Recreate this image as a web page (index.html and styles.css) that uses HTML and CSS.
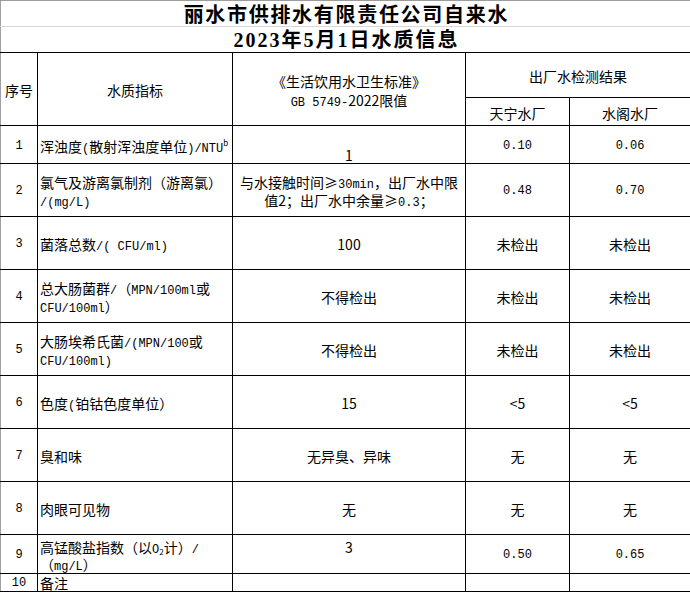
FILE: index.html
```html
<!DOCTYPE html>
<html lang="zh-CN">
<head>
<meta charset="utf-8">
<title>水质信息</title>
<link rel="stylesheet" href="styles.css">
</head>
<body>
<table class="sheet">
  <colgroup>
    <col class="c1"><col class="c2"><col class="c3"><col class="c4"><col class="c5">
  </colgroup>
  <tr class="t1"><td colspan="5" class="title">丽水市供排水有限责任公司自来水</td></tr>
  <tr class="t2"><td colspan="5" class="title title2">2023年5月1日水质信息</td></tr>
  <tr class="h1">
    <td rowspan="2" class="l">序号</td>
    <td rowspan="2">水质指标</td>
    <td rowspan="2" class="std">《生活饮用水卫生标准》<br><span class="m">GB 5749-</span>2022限值</td>
    <td colspan="2">出厂水检测结果</td>
  </tr>
  <tr class="h2"><td>天宁水厂</td><td>水阁水厂</td></tr>
  <tr class="r1">
    <td class="l m">1</td>
    <td class="left">浑浊度<span class="m">(</span>散射浑浊度单位<span class="m">)/NTU</span><sup class="sup">b</sup></td>
    <td class="bot">1</td>
    <td class="m">0.10</td><td class="m">0.06</td>
  </tr>
  <tr class="r">
    <td class="l m">2</td>
    <td class="left">氯气及游离氯制剂（游离氯）<br><span class="m">/(mg/L)</span></td>
    <td>与水接触时间≥<span class="m">30min</span>，出厂水中限<br>值2；出厂水中余量≥<span class="m">0.3</span>；</td>
    <td class="m">0.48</td><td class="m">0.70</td>
  </tr>
  <tr class="r">
    <td class="l m">3</td>
    <td class="left">菌落总数<span class="m">/( CFU/ml)</span></td>
    <td>100</td>
    <td>未检出</td><td>未检出</td>
  </tr>
  <tr class="r">
    <td class="l m">4</td>
    <td class="left">总大肠菌群<span class="m">/</span>（<span class="m">MPN/100ml</span>或<br><span class="m">CFU/100ml</span>）</td>
    <td>不得检出</td>
    <td>未检出</td><td>未检出</td>
  </tr>
  <tr class="r">
    <td class="l m">5</td>
    <td class="left">大肠埃希氏菌<span class="m">/(MPN/100</span>或<br><span class="m">CFU/100ml)</span></td>
    <td>不得检出</td>
    <td>未检出</td><td>未检出</td>
  </tr>
  <tr class="r">
    <td class="l m">6</td>
    <td class="left">色度<span class="m">(</span>铂钴色度单位）</td>
    <td>15</td>
    <td>&lt;5</td><td>&lt;5</td>
  </tr>
  <tr class="r">
    <td class="l m">7</td>
    <td class="left">臭和味</td>
    <td>无异臭、异味</td>
    <td>无</td><td>无</td>
  </tr>
  <tr class="r">
    <td class="l m">8</td>
    <td class="left">肉眼可见物</td>
    <td>无</td>
    <td>无</td><td>无</td>
  </tr>
  <tr class="r9">
    <td class="l m">9</td>
    <td class="left top">高锰酸盐指数（以<span class="m">O</span><sub class="sub">2</sub>计）<span class="m">/</span><br>（<span class="m">mg/L</span>）</td>
    <td class="top">3</td>
    <td class="m">0.50</td><td class="m">0.65</td>
  </tr>
  <tr class="r10">
    <td class="l m">10</td>
    <td class="left">备注</td>
    <td></td>
    <td></td><td></td>
  </tr>
</table>
</body>
</html>
```

FILE: styles.css
```css
html, body {
  margin: 0;
  padding: 0;
  background: #ffffff;
}

body {
  font-family: "Noto Sans CJK SC", sans-serif;
  font-size: 14px;
  color: #000000;
}

.sheet {
  border-collapse: collapse;
  table-layout: fixed;
  width: 690px;
}

.c1 { width: 37px; }
.c2 { width: 195px; }
.c3 { width: 233px; }
.c4 { width: 104px; }
.c5 { width: 121px; }

.sheet td {
  border: 1px solid #000000;
  padding: 3px 0 0 0;
  text-align: center;
  vertical-align: middle;
  line-height: 17px;
  white-space: nowrap;
  overflow: hidden;
}

.sheet .r td {
  line-height: 18px;
  padding-top: 2px;
}

.sheet td.l {
  border-left: 1px solid #a0a0a0;
}

.sheet td.title {
  border: none;
  border-left: 1px solid #a0a0a0;
  border-right: 1px solid #d8d8d8;
  font-weight: bold;
  font-size: 20px;
  letter-spacing: 1.7px;
  padding: 1px 0 0 1.7px;
  line-height: 24px;
  overflow: visible;
}

.t1 { height: 26px; }
.t2 { height: 26px; }
.t1 td.title {
  border-top: 1px solid #9c9c9c;
  border-bottom: 1px solid #d8d8d8;
}
.t2 td.title {
  border-bottom: 1px solid #000000;
  font-family: "Liberation Serif", "Noto Sans CJK SC", serif;
  letter-spacing: 2px;
  padding-left: 2px;
}

.h1 { height: 45px; }
.h2 { height: 28px; }
.r1 { height: 38px; }
.r { height: 53px; }
.r9 { height: 39px; }
.r10 { height: 18px; }

.sheet td.std {
  line-height: 19px;
  padding-top: 4px;
}

.sheet td.left {
  text-align: left;
  padding-left: 2px;
}

.sheet td.top {
  vertical-align: top;
  padding-top: 4px;
}

.sheet td.bot {
  vertical-align: bottom;
  padding: 0;
  line-height: 15px;
}

.r10 td {
  line-height: 15px;
}
.sheet .r10 td {
  padding-top: 2px;
}

.m {
  font-family: "Liberation Mono", "Noto Sans CJK SC", monospace;
  font-size: 12px;
  line-height: 1;
}

.sup {
  font-size: 8px;
  line-height: 0;
  vertical-align: 6px;
}

.sub {
  font-size: 8px;
  line-height: 0;
  vertical-align: -2px;
}
```
